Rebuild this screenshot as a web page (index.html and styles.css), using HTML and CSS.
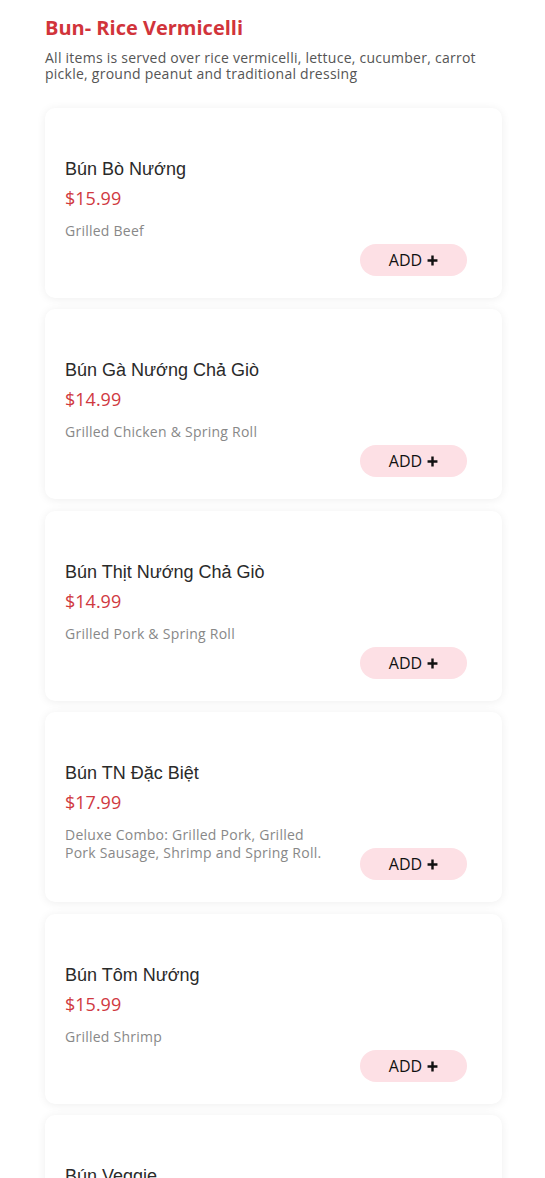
FILE: index.html
```html
<!DOCTYPE html>
<html>
<head>
<meta charset="utf-8">
<title>Bun- Rice Vermicelli</title>
<link rel="stylesheet" href="styles.css">
</head>
<body>
<div class="menu">
	<h2 class="cat-title">Bun- Rice Vermicelli</h2>
	<p class="cat-desc">All items is served over rice vermicelli, lettuce, cucumber, carrot pickle, ground peanut and traditional dressing</p>

	<div class="item">
		<div class="info">
			<h3 class="name">Bún Bò Nướng</h3>
			<p class="price">$15.99</p>
			<p class="desc">Grilled Beef</p>
		</div>
		<a class="add" href="#">ADD <svg viewBox="0 0 10 10" width="11" height="11"><path d="M5 0.5v9M0.5 5h9" stroke="#111" stroke-width="2.2"/></svg></a>
	</div>

	<div class="item">
		<div class="info">
			<h3 class="name">Bún Gà Nướng Chả Giò</h3>
			<p class="price">$14.99</p>
			<p class="desc">Grilled Chicken &amp; Spring Roll</p>
		</div>
		<a class="add" href="#">ADD <svg viewBox="0 0 10 10" width="11" height="11"><path d="M5 0.5v9M0.5 5h9" stroke="#111" stroke-width="2.2"/></svg></a>
	</div>

	<div class="item">
		<div class="info">
			<h3 class="name">Bún Thịt Nướng Chả Giò</h3>
			<p class="price">$14.99</p>
			<p class="desc">Grilled Pork &amp; Spring Roll</p>
		</div>
		<a class="add" href="#">ADD <svg viewBox="0 0 10 10" width="11" height="11"><path d="M5 0.5v9M0.5 5h9" stroke="#111" stroke-width="2.2"/></svg></a>
	</div>

	<div class="item">
		<div class="info">
			<h3 class="name">Bún TN Đặc Biệt</h3>
			<p class="price">$17.99</p>
			<p class="desc">Deluxe Combo: Grilled Pork, Grilled Pork Sausage, Shrimp and Spring Roll.</p>
		</div>
		<a class="add" href="#">ADD <svg viewBox="0 0 10 10" width="11" height="11"><path d="M5 0.5v9M0.5 5h9" stroke="#111" stroke-width="2.2"/></svg></a>
	</div>

	<div class="item">
		<div class="info">
			<h3 class="name">Bún Tôm Nướng</h3>
			<p class="price">$15.99</p>
			<p class="desc">Grilled Shrimp</p>
		</div>
		<a class="add" href="#">ADD <svg viewBox="0 0 10 10" width="11" height="11"><path d="M5 0.5v9M0.5 5h9" stroke="#111" stroke-width="2.2"/></svg></a>
	</div>

	<div class="item">
		<div class="info">
			<h3 class="name">Bún Veggie</h3>
			<p class="price">$13.99</p>
			<p class="desc">Tofu and Vegetables</p>
		</div>
		<a class="add" href="#">ADD <svg viewBox="0 0 10 10" width="11" height="11"><path d="M5 0.5v9M0.5 5h9" stroke="#111" stroke-width="2.2"/></svg></a>
	</div>
</div>
</body>
</html>
```

FILE: styles.css
```css
*{ margin:0; padding:0; box-sizing:border-box;}
body{ background:#fff; font-family:"Open Sans", sans-serif;}
.menu{ width:457px; margin:0 0 0 45px; padding-top:16px;}
.cat-title{ font-size:20px; line-height:24px; font-weight:700; color:#d1343b;}
.cat-desc{ margin-top:10px; font-size:14px; line-height:16px; color:#555; letter-spacing:0.25px;}

.item{ display:flex; justify-content:space-between; height:190px; margin-top:26px; padding:50px 35px 22px 20px; background:#fff; border-radius:10px; box-shadow:0 1px 10px rgba(0,0,0,0.07);}
.item + .item{ margin-top:11.4px;}
.info{ width:64%;}
.name{ font-family:"Liberation Sans", Arial, sans-serif; font-size:18px; line-height:22px; font-weight:400; color:#2a2a2a;}
.price{ margin-top:6px; font-size:18px; line-height:24px; color:#d0393f;}
.desc{ margin-top:12px; font-size:14px; line-height:18px; color:#888; letter-spacing:0.25px;}

.add{ align-self:flex-end; display:flex; align-items:center; justify-content:center; gap:5px; width:107px; height:32px; border-radius:16px; background:#fde0e5; color:#111; font-size:16px; text-decoration:none;}
.add svg{ display:block; margin-top:1px;}
```
